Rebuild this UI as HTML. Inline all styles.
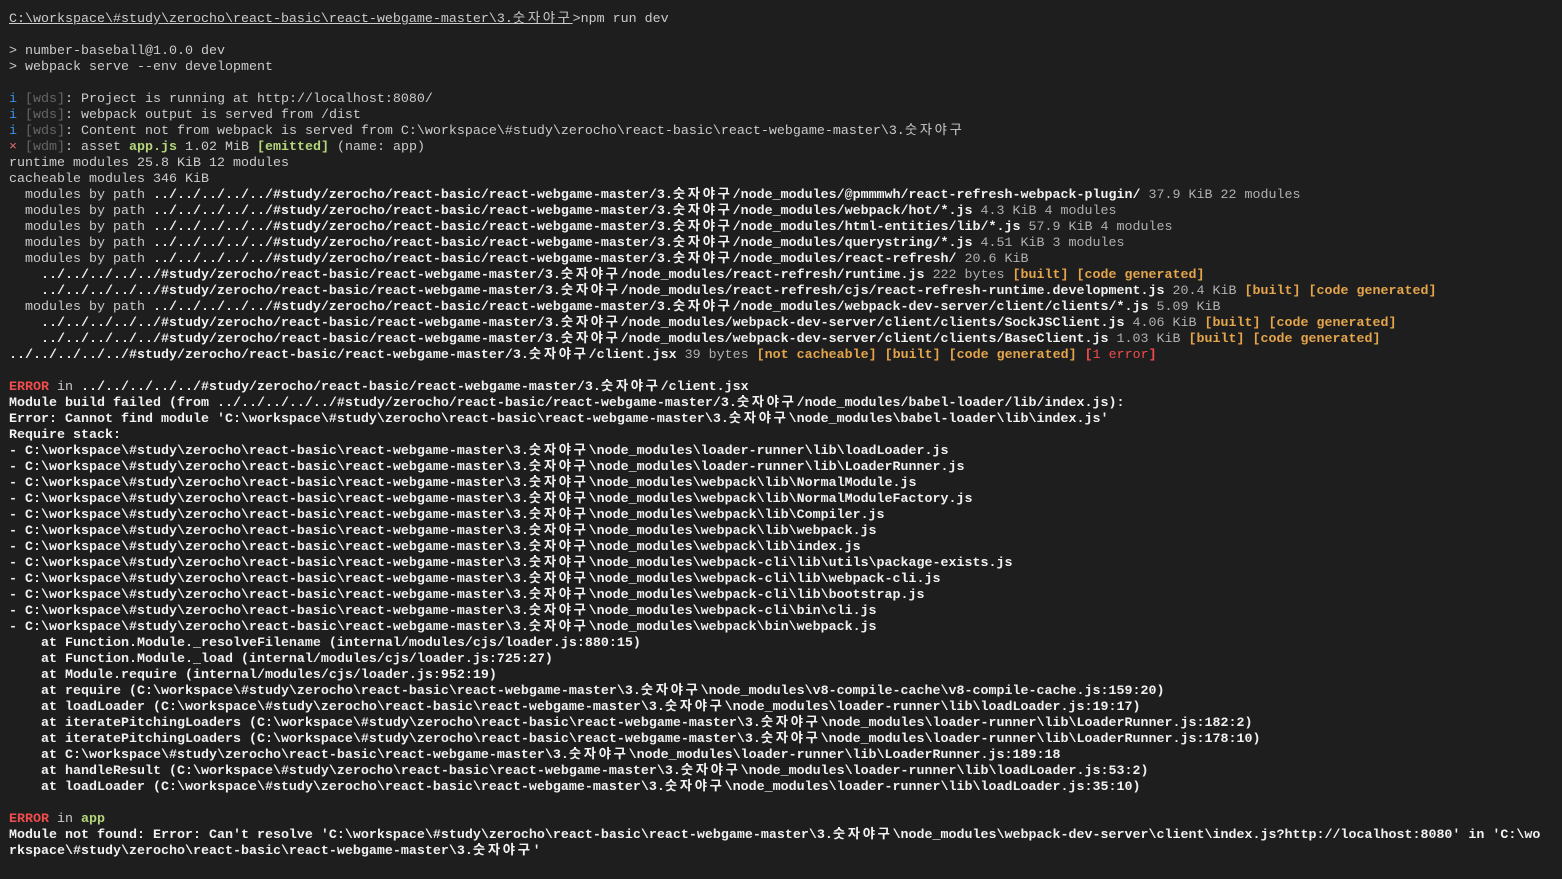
<!DOCTYPE html>
<html><head><meta charset="utf-8"><style>
html,body{margin:0;background:#1e1e1e;width:1562px;height:879px;overflow:hidden}
pre{margin:0;padding:12px 0 0 9px;font-family:"Liberation Mono","Noto Sans CJK KR",monospace;font-size:13.33px;line-height:16px;color:#cccccc;white-space:pre}
.k{letter-spacing:2.67px;font-family:"Noto Sans CJK KR","NanumGothic",sans-serif;line-height:0}
b{color:#f2f2f2}
.o{color:#e5a54b;font-weight:bold}
.r{color:#f14c4c;font-weight:bold}
.re{color:#e06c6c}
.g{color:#b5d67a;font-weight:bold}
.d{color:#666;line-height:0}
.i{color:#3b8eea}
.s{color:#b0b0b0}
u{text-decoration:underline}
</style></head><body><pre><u>C:\workspace\#study\zerocho\react-basic\react-webgame-master\3.<span class="k">숫자야구</span></u>&gt;npm run dev

&gt; number-baseball@1.0.0 dev
&gt; webpack serve --env development

<span class="i">i</span> <span class="d">[wds]</span>: Project is running at http://localhost:8080/
<span class="i">i</span> <span class="d">[wds]</span>: webpack output is served from /dist
<span class="i">i</span> <span class="d">[wds]</span>: Content not from webpack is served from C:\workspace\#study\zerocho\react-basic\react-webgame-master\3.<span class="k">숫자야구</span>
<span class="re">×</span> <span class="d">[wdm]</span>: asset <span class="g">app.js</span> 1.02 MiB <span class="g">[emitted]</span> (name: app)
runtime modules 25.8 KiB 12 modules
cacheable modules 346 KiB
  modules by path <b>../../../../../#study/zerocho/react-basic/react-webgame-master/3.<span class="k">숫자야구</span>/node_modules/@pmmmwh/react-refresh-webpack-plugin/</b> <span class="s">37.9 KiB 22 modules</span>
  modules by path <b>../../../../../#study/zerocho/react-basic/react-webgame-master/3.<span class="k">숫자야구</span>/node_modules/webpack/hot/*.js</b> <span class="s">4.3 KiB 4 modules</span>
  modules by path <b>../../../../../#study/zerocho/react-basic/react-webgame-master/3.<span class="k">숫자야구</span>/node_modules/html-entities/lib/*.js</b> <span class="s">57.9 KiB 4 modules</span>
  modules by path <b>../../../../../#study/zerocho/react-basic/react-webgame-master/3.<span class="k">숫자야구</span>/node_modules/querystring/*.js</b> <span class="s">4.51 KiB 3 modules</span>
  modules by path <b>../../../../../#study/zerocho/react-basic/react-webgame-master/3.<span class="k">숫자야구</span>/node_modules/react-refresh/</b> <span class="s">20.6 KiB</span>
    <b>../../../../../#study/zerocho/react-basic/react-webgame-master/3.<span class="k">숫자야구</span>/node_modules/react-refresh/runtime.js</b> <span class="s">222 bytes</span> <span class="o">[built]</span> <span class="o">[code generated]</span>
    <b>../../../../../#study/zerocho/react-basic/react-webgame-master/3.<span class="k">숫자야구</span>/node_modules/react-refresh/cjs/react-refresh-runtime.development.js</b> <span class="s">20.4 KiB</span> <span class="o">[built]</span> <span class="o">[code generated]</span>
  modules by path <b>../../../../../#study/zerocho/react-basic/react-webgame-master/3.<span class="k">숫자야구</span>/node_modules/webpack-dev-server/client/clients/*.js</b> <span class="s">5.09 KiB</span>
    <b>../../../../../#study/zerocho/react-basic/react-webgame-master/3.<span class="k">숫자야구</span>/node_modules/webpack-dev-server/client/clients/SockJSClient.js</b> <span class="s">4.06 KiB</span> <span class="o">[built]</span> <span class="o">[code generated]</span>
    <b>../../../../../#study/zerocho/react-basic/react-webgame-master/3.<span class="k">숫자야구</span>/node_modules/webpack-dev-server/client/clients/BaseClient.js</b> <span class="s">1.03 KiB</span> <span class="o">[built]</span> <span class="o">[code generated]</span>
<b>../../../../../#study/zerocho/react-basic/react-webgame-master/3.<span class="k">숫자야구</span>/client.jsx</b> <span class="s">39 bytes</span> <span class="o">[not cacheable]</span> <span class="o">[built]</span> <span class="o">[code generated]</span> <span class="r">[<span style="font-weight:normal">1 error</span>]</span>

<span class="r">ERROR</span> in <b>../../../../../#study/zerocho/react-basic/react-webgame-master/3.<span class="k">숫자야구</span>/client.jsx</b>
<b>Module build failed (from ../../../../../#study/zerocho/react-basic/react-webgame-master/3.<span class="k">숫자야구</span>/node_modules/babel-loader/lib/index.js):
Error: Cannot find module 'C:\workspace\#study\zerocho\react-basic\react-webgame-master\3.<span class="k">숫자야구</span>\node_modules\babel-loader\lib\index.js'
Require stack:
- C:\workspace\#study\zerocho\react-basic\react-webgame-master\3.<span class="k">숫자야구</span>\node_modules\loader-runner\lib\loadLoader.js
- C:\workspace\#study\zerocho\react-basic\react-webgame-master\3.<span class="k">숫자야구</span>\node_modules\loader-runner\lib\LoaderRunner.js
- C:\workspace\#study\zerocho\react-basic\react-webgame-master\3.<span class="k">숫자야구</span>\node_modules\webpack\lib\NormalModule.js
- C:\workspace\#study\zerocho\react-basic\react-webgame-master\3.<span class="k">숫자야구</span>\node_modules\webpack\lib\NormalModuleFactory.js
- C:\workspace\#study\zerocho\react-basic\react-webgame-master\3.<span class="k">숫자야구</span>\node_modules\webpack\lib\Compiler.js
- C:\workspace\#study\zerocho\react-basic\react-webgame-master\3.<span class="k">숫자야구</span>\node_modules\webpack\lib\webpack.js
- C:\workspace\#study\zerocho\react-basic\react-webgame-master\3.<span class="k">숫자야구</span>\node_modules\webpack\lib\index.js
- C:\workspace\#study\zerocho\react-basic\react-webgame-master\3.<span class="k">숫자야구</span>\node_modules\webpack-cli\lib\utils\package-exists.js
- C:\workspace\#study\zerocho\react-basic\react-webgame-master\3.<span class="k">숫자야구</span>\node_modules\webpack-cli\lib\webpack-cli.js
- C:\workspace\#study\zerocho\react-basic\react-webgame-master\3.<span class="k">숫자야구</span>\node_modules\webpack-cli\lib\bootstrap.js
- C:\workspace\#study\zerocho\react-basic\react-webgame-master\3.<span class="k">숫자야구</span>\node_modules\webpack-cli\bin\cli.js
- C:\workspace\#study\zerocho\react-basic\react-webgame-master\3.<span class="k">숫자야구</span>\node_modules\webpack\bin\webpack.js
    at Function.Module._resolveFilename (internal/modules/cjs/loader.js:880:15)
    at Function.Module._load (internal/modules/cjs/loader.js:725:27)
    at Module.require (internal/modules/cjs/loader.js:952:19)
    at require (C:\workspace\#study\zerocho\react-basic\react-webgame-master\3.<span class="k">숫자야구</span>\node_modules\v8-compile-cache\v8-compile-cache.js:159:20)
    at loadLoader (C:\workspace\#study\zerocho\react-basic\react-webgame-master\3.<span class="k">숫자야구</span>\node_modules\loader-runner\lib\loadLoader.js:19:17)
    at iteratePitchingLoaders (C:\workspace\#study\zerocho\react-basic\react-webgame-master\3.<span class="k">숫자야구</span>\node_modules\loader-runner\lib\LoaderRunner.js:182:2)
    at iteratePitchingLoaders (C:\workspace\#study\zerocho\react-basic\react-webgame-master\3.<span class="k">숫자야구</span>\node_modules\loader-runner\lib\LoaderRunner.js:178:10)
    at C:\workspace\#study\zerocho\react-basic\react-webgame-master\3.<span class="k">숫자야구</span>\node_modules\loader-runner\lib\LoaderRunner.js:189:18
    at handleResult (C:\workspace\#study\zerocho\react-basic\react-webgame-master\3.<span class="k">숫자야구</span>\node_modules\loader-runner\lib\loadLoader.js:53:2)
    at loadLoader (C:\workspace\#study\zerocho\react-basic\react-webgame-master\3.<span class="k">숫자야구</span>\node_modules\loader-runner\lib\loadLoader.js:35:10)</b>

<span class="r">ERROR</span> in <span class="g">app</span>
<b>Module not found: Error: Can't resolve 'C:\workspace\#study\zerocho\react-basic\react-webgame-master\3.<span class="k">숫자야구</span>\node_modules\webpack-dev-server\client\index.js?http://localhost:8080' in 'C:\wo
rkspace\#study\zerocho\react-basic\react-webgame-master\3.<span class="k">숫자야구</span>'</b></pre></body></html>
